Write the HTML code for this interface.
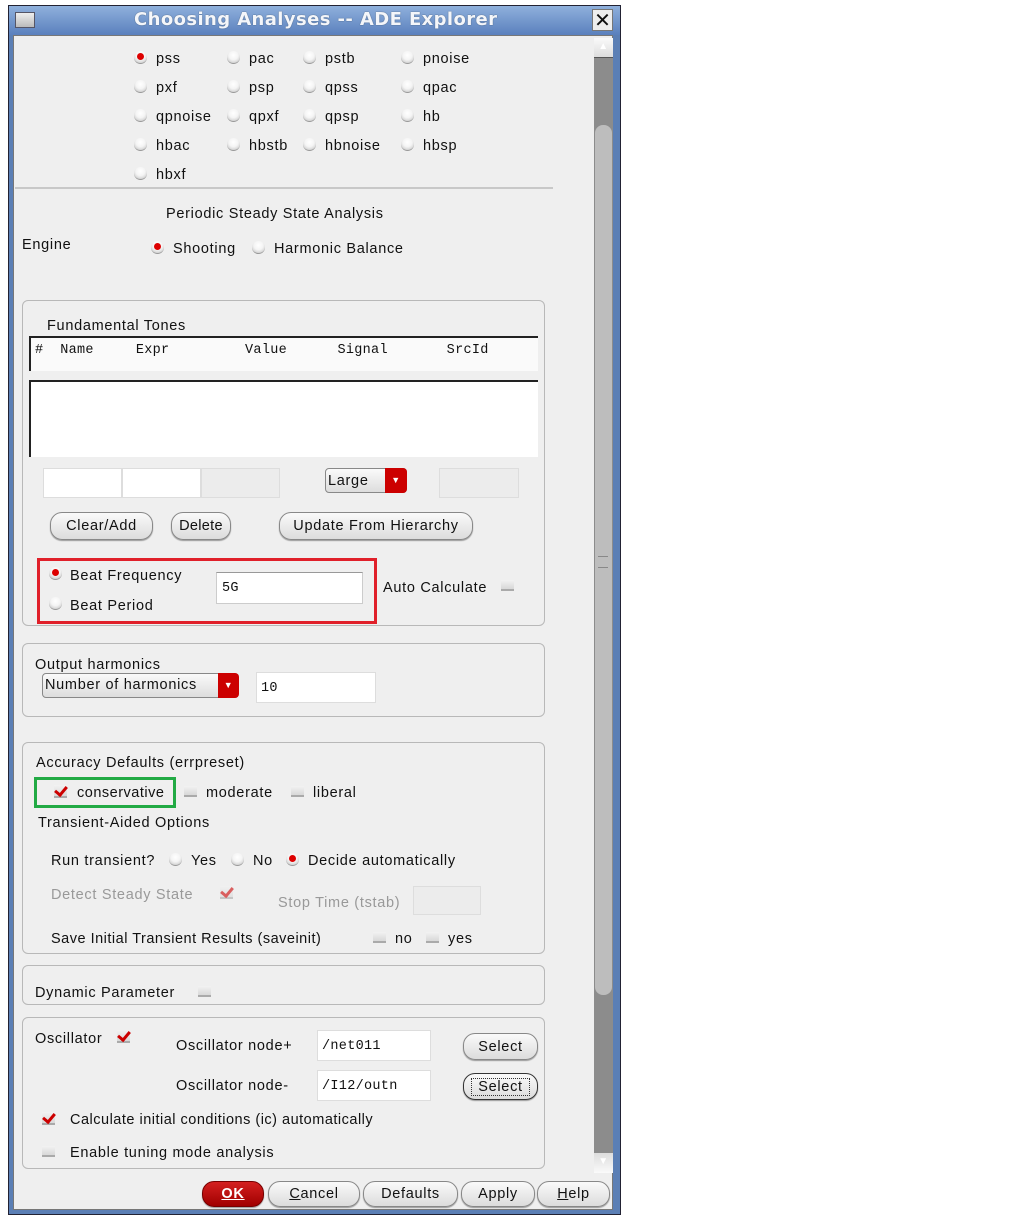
<!DOCTYPE html>
<html><head><meta charset="utf-8"><style>
*{box-sizing:border-box}
body{margin:0;width:1013px;height:1221px;background:#fff;position:relative;overflow:hidden;font-family:"Liberation Sans","DejaVu Sans",sans-serif;font-size:14.5px;color:#111;letter-spacing:0.7px}
.a{position:absolute;white-space:nowrap;line-height:16px}
.r{position:absolute;width:13px;height:13px;border-radius:50%;background:radial-gradient(circle at 50% 35%,#fff 0,#f4f4f4 45%,#bbb 100%);border-bottom:1px solid #999}
.r.on::after{content:"";position:absolute;left:3px;top:2px;width:7px;height:7px;border-radius:50%;background:#d00}
.c{position:absolute;width:13px;height:11px;background:linear-gradient(#f2f2f2,#d8d8d8);border-bottom:2px solid #aaa}
.ck{position:absolute;width:13px;height:13px;background:linear-gradient(#f2f2f2,#d8d8d8);border-bottom:2px solid #aaa}
.ck::after{content:"";position:absolute;left:3px;top:-1px;width:5px;height:9px;border-right:3px solid #c00;border-bottom:3px solid #c00;transform:rotate(40deg)}
.box{position:absolute;border:1px solid #b8b8b8;border-radius:6px}
.in{position:absolute;background:#fff;border:1px solid #ccc;border-top-color:#999}
.btn{position:absolute;height:28px;border:1px solid #888;border-radius:12px;background:linear-gradient(#fafafa,#dcdcdc);text-align:center;line-height:26px;box-shadow:0 1px 1px #999}
.mono{font-family:"Liberation Mono","DejaVu Sans Mono",monospace;font-size:13.5px;letter-spacing:0.3px}
.g{color:#999}
</style></head><body>
<div class="a" style="left:8px;top:5px;width:613px;height:1210px;background:#5b7fb5;border:1px solid #223"></div>
<div class="a" style="left:9px;top:6px;width:611px;height:29px;background:linear-gradient(#8fb0dc,#5a80bd);"></div>
<div class="a" style="left:15px;top:12px;width:20px;height:16px;background:linear-gradient(#eee,#bbb);border:1px solid #556"></div>
<div class="a" style="left:134px;top:9px;color:#f4f6fa;font-weight:bold;font-size:18px;line-height:22px;font-family:'DejaVu Sans',sans-serif;letter-spacing:0.4px;text-shadow:0 0 1px #345">Choosing Analyses -- ADE Explorer</div>
<div class="a" style="left:592px;top:9px;width:21px;height:22px;background:#eee;border:1px solid #777;font-size:20px;line-height:20px;text-align:center;font-family:'DejaVu Sans',sans-serif;letter-spacing:0">✕</div>
<div class="a" style="left:13px;top:35px;width:600px;height:1175px;background:#efefef;border:1px solid #777"></div>
<div class="a" style="left:594px;top:38px;width:19px;height:1135px;background:#8c8c8c"></div>
<div class="a" style="left:594px;top:38px;width:19px;height:20px;background:linear-gradient(#fafafa,#ddd);border-bottom:1px solid #555;font-size:10px;text-align:center;color:#fff;line-height:18px">▲</div>
<div class="a" style="left:595px;top:125px;width:17px;height:870px;background:#bdbdbd;border-radius:8px"></div>
<div class="a" style="left:598px;top:556px;width:10px;height:12px;border-top:1px solid #888;border-bottom:1px solid #888"></div>
<div class="a" style="left:594px;top:1153px;width:19px;height:20px;background:linear-gradient(#ddd,#fafafa);font-size:10px;text-align:center;color:#fff;line-height:18px">▼</div>

<div class="r on" style="left:134px;top:51px"></div><div class="a" style="left:156px;top:51px">pss</div>
<div class="r" style="left:227px;top:51px"></div><div class="a" style="left:249px;top:51px">pac</div>
<div class="r" style="left:303px;top:51px"></div><div class="a" style="left:325px;top:51px">pstb</div>
<div class="r" style="left:401px;top:51px"></div><div class="a" style="left:423px;top:51px">pnoise</div>
<div class="r" style="left:134px;top:80px"></div><div class="a" style="left:156px;top:80px">pxf</div>
<div class="r" style="left:227px;top:80px"></div><div class="a" style="left:249px;top:80px">psp</div>
<div class="r" style="left:303px;top:80px"></div><div class="a" style="left:325px;top:80px">qpss</div>
<div class="r" style="left:401px;top:80px"></div><div class="a" style="left:423px;top:80px">qpac</div>
<div class="r" style="left:134px;top:109px"></div><div class="a" style="left:156px;top:109px">qpnoise</div>
<div class="r" style="left:227px;top:109px"></div><div class="a" style="left:249px;top:109px">qpxf</div>
<div class="r" style="left:303px;top:109px"></div><div class="a" style="left:325px;top:109px">qpsp</div>
<div class="r" style="left:401px;top:109px"></div><div class="a" style="left:423px;top:109px">hb</div>
<div class="r" style="left:134px;top:138px"></div><div class="a" style="left:156px;top:138px">hbac</div>
<div class="r" style="left:227px;top:138px"></div><div class="a" style="left:249px;top:138px">hbstb</div>
<div class="r" style="left:303px;top:138px"></div><div class="a" style="left:325px;top:138px">hbnoise</div>
<div class="r" style="left:401px;top:138px"></div><div class="a" style="left:423px;top:138px">hbsp</div>
<div class="r" style="left:134px;top:167px"></div><div class="a" style="left:156px;top:167px">hbxf</div>
<div class="a" style="left:15px;top:187px;width:538px;height:2px;background:#c8c8c8"></div>

<div class="a" style="left:166px;top:206px">Periodic Steady State Analysis</div>
<div class="a" style="left:22px;top:237px">Engine</div>
<div class="r on" style="left:151px;top:241px"></div><div class="a" style="left:173px;top:241px">Shooting</div>
<div class="r" style="left:252px;top:241px"></div><div class="a" style="left:274px;top:241px">Harmonic Balance</div>

<div class="box" style="left:22px;top:300px;width:523px;height:326px"></div>
<div class="a" style="left:47px;top:318px">Fundamental Tones</div>
<div class="a" style="left:29px;top:336px;width:509px;height:35px;background:#fafafa;border-top:2px solid #222;border-left:2px solid #222"></div>
<div class="a mono" style="left:35px;top:343px">#&nbsp;&nbsp;Name&nbsp;&nbsp;&nbsp;&nbsp;&nbsp;Expr&nbsp;&nbsp;&nbsp;&nbsp;&nbsp;&nbsp;&nbsp;&nbsp;&nbsp;Value&nbsp;&nbsp;&nbsp;&nbsp;&nbsp;&nbsp;Signal&nbsp;&nbsp;&nbsp;&nbsp;&nbsp;&nbsp;&nbsp;SrcId</div>
<div class="a" style="left:29px;top:380px;width:509px;height:77px;background:#fff;border-top:2px solid #222;border-left:2px solid #222"></div>
<div class="in" style="left:43px;top:468px;width:79px;height:30px;border-color:#ddd"></div>
<div class="in" style="left:122px;top:468px;width:79px;height:30px;border-color:#ddd"></div>
<div class="in" style="left:201px;top:468px;width:79px;height:30px;background:#ececec;border-color:#ddd"></div>
<div class="a" style="left:325px;top:468px;width:82px;height:25px;border:1px solid #888;border-radius:4px;background:linear-gradient(#fafafa,#ddd);padding-left:2px;line-height:25px">Large</div>
<div class="a" style="left:385px;top:468px;width:22px;height:25px;background:#c00;border-radius:0 4px 4px 0;color:#fff;font-size:9px;text-align:center;line-height:25px">▼</div>
<div class="in" style="left:439px;top:468px;width:80px;height:30px;background:#ececec;border-color:#ddd"></div>
<div class="btn" style="left:50px;top:512px;width:103px">Clear/Add</div>
<div class="btn" style="left:171px;top:512px;width:60px;letter-spacing:0.3px">Delete</div>
<div class="btn" style="left:279px;top:512px;width:194px">Update From Hierarchy</div>
<div class="a" style="left:37px;top:558px;width:340px;height:66px;border:3px solid #e0202a"></div>
<div class="r on" style="left:49px;top:567px"></div><div class="a" style="left:70px;top:568px">Beat Frequency</div>
<div class="r" style="left:49px;top:597px"></div><div class="a" style="left:70px;top:598px">Beat Period</div>
<div class="in" style="left:216px;top:572px;width:147px;height:32px"></div><div class="a mono" style="left:222px;top:581px">5G</div>
<div class="a" style="left:383px;top:580px">Auto Calculate</div>
<div class="c" style="left:501px;top:580px"></div>

<div class="box" style="left:22px;top:643px;width:523px;height:74px"></div>
<div class="a" style="left:35px;top:657px">Output harmonics</div>
<div class="a" style="left:42px;top:673px;width:196px;height:25px;border:1px solid #888;border-radius:4px;background:linear-gradient(#fafafa,#ddd);padding-left:2px;line-height:23px">Number of harmonics</div>
<div class="a" style="left:218px;top:673px;width:21px;height:25px;background:#c00;border-radius:0 4px 4px 0;color:#fff;font-size:9px;text-align:center;line-height:25px">▼</div>
<div class="in" style="left:256px;top:672px;width:120px;height:31px;border-color:#ddd"></div><div class="a mono" style="left:261px;top:681px">10</div>

<div class="box" style="left:22px;top:742px;width:523px;height:212px"></div>
<div class="a" style="left:36px;top:755px">Accuracy Defaults (errpreset)</div>
<div class="a" style="left:34px;top:777px;width:142px;height:31px;border:3px solid #22aa44"></div>
<div class="ck" style="left:54px;top:785px"></div><div class="a" style="left:77px;top:785px;letter-spacing:0.5px">conservative</div>
<div class="c" style="left:184px;top:786px"></div><div class="a" style="left:206px;top:785px">moderate</div>
<div class="c" style="left:291px;top:786px"></div><div class="a" style="left:313px;top:785px">liberal</div>
<div class="a" style="left:38px;top:815px">Transient-Aided Options</div>
<div class="a" style="left:51px;top:853px">Run transient?</div>
<div class="r" style="left:169px;top:853px"></div><div class="a" style="left:191px;top:853px">Yes</div>
<div class="r" style="left:231px;top:853px"></div><div class="a" style="left:253px;top:853px">No</div>
<div class="r on" style="left:286px;top:853px"></div><div class="a" style="left:308px;top:853px">Decide automatically</div>
<div class="a g" style="left:51px;top:887px">Detect Steady State</div>
<div class="ck" style="left:220px;top:886px;opacity:.6"></div>
<div class="a g" style="left:278px;top:895px">Stop Time (tstab)</div>
<div class="in" style="left:413px;top:886px;width:68px;height:29px;background:#ececec;border-color:#ddd"></div>
<div class="a" style="left:51px;top:931px;letter-spacing:0.5px">Save Initial Transient Results (saveinit)</div>
<div class="c" style="left:373px;top:932px"></div><div class="a" style="left:395px;top:931px">no</div>
<div class="c" style="left:426px;top:932px"></div><div class="a" style="left:448px;top:931px">yes</div>

<div class="box" style="left:22px;top:965px;width:523px;height:40px"></div>
<div class="a" style="left:35px;top:985px">Dynamic Parameter</div>
<div class="c" style="left:198px;top:986px"></div>

<div class="box" style="left:22px;top:1017px;width:523px;height:152px"></div>
<div class="a" style="left:35px;top:1031px">Oscillator</div>
<div class="ck" style="left:117px;top:1030px"></div>
<div class="a" style="left:176px;top:1038px">Oscillator node+</div>
<div class="in" style="left:317px;top:1030px;width:114px;height:31px;border-color:#ddd"></div><div class="a mono" style="left:322px;top:1039px">/net011</div>
<div class="btn" style="left:463px;top:1033px;width:75px;height:27px">Select</div>
<div class="a" style="left:176px;top:1078px">Oscillator node-</div>
<div class="in" style="left:317px;top:1070px;width:114px;height:31px;border-color:#ddd"></div><div class="a mono" style="left:322px;top:1079px">/I12/outn</div>
<div class="btn" style="left:463px;top:1073px;width:75px;height:27px;border-color:#333"><span style="border:1px dotted #333;padding:0 6px">Select</span></div>
<div class="ck" style="left:42px;top:1112px"></div><div class="a" style="left:70px;top:1112px;letter-spacing:0.5px">Calculate initial conditions (ic) automatically</div>
<div class="c" style="left:42px;top:1146px"></div><div class="a" style="left:70px;top:1145px">Enable tuning mode analysis</div>

<div class="btn" style="left:202px;top:1181px;width:62px;height:26px;line-height:24px;background:linear-gradient(#d42020,#a00000);color:#fff;font-weight:bold;border-color:#700"><u>OK</u></div>
<div class="btn" style="left:268px;top:1181px;width:92px;height:26px;line-height:24px"><u>C</u>ancel</div>
<div class="btn" style="left:363px;top:1181px;width:95px;height:26px;line-height:24px">Defaults</div>
<div class="btn" style="left:461px;top:1181px;width:74px;height:26px;line-height:24px">Apply</div>
<div class="btn" style="left:537px;top:1181px;width:73px;height:26px;line-height:24px"><u>H</u>elp</div>
</body></html>
